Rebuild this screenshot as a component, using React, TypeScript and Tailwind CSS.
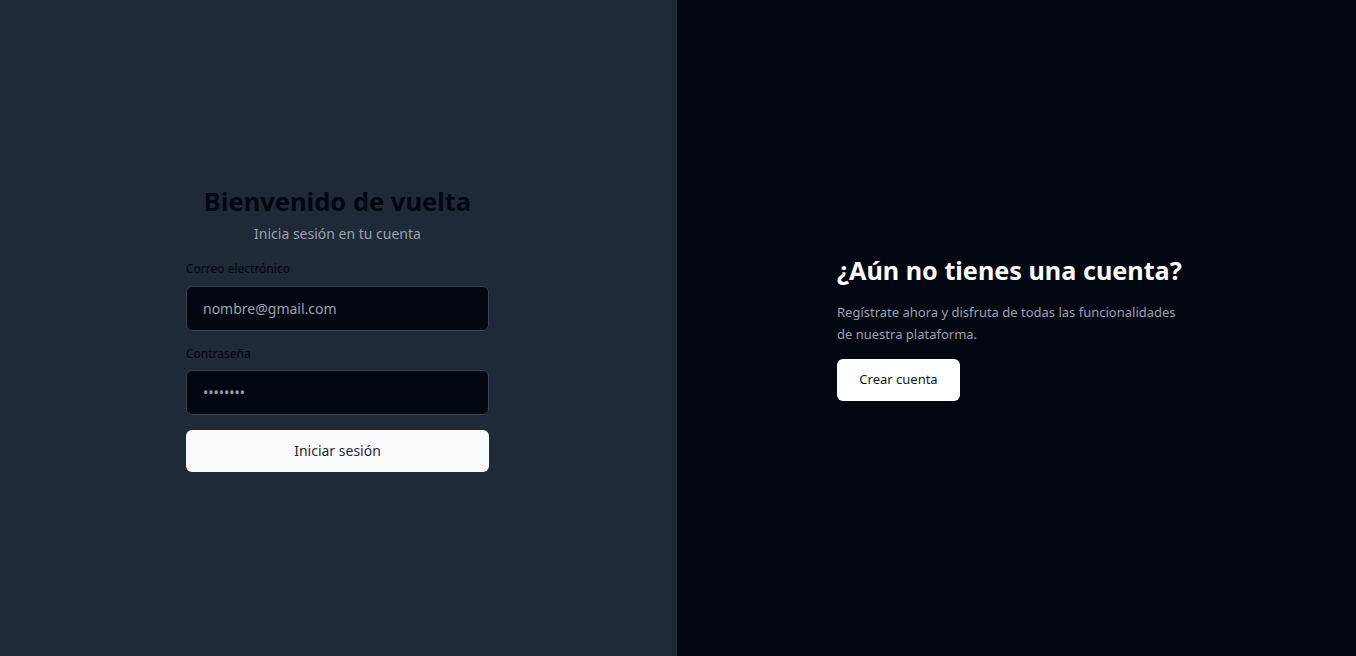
export default function App() {
  return (
    <div
      className="flex h-screen w-full"
      style={{ fontFamily: '"Noto Sans", "Open Sans", sans-serif' }}
    >
      <div className="flex w-[677px] shrink-0 flex-col items-center justify-center bg-[#1f2937] pr-[2px]">
        <div className="flex w-[303px] flex-col">
          <h1 className="text-center text-[25.5px] leading-[32px] font-bold text-[#030712]">
            Bienvenido de vuelta
          </h1>
          <p className="mt-[7px] text-center text-sm text-gray-400">Inicia sesión en tu cuenta</p>
          <label className="mt-[17px] text-xs text-[#030712]">Correo electrónico</label>
          <input
            type="email"
            placeholder="nombre@gmail.com"
            className="mt-[9px] h-[45px] rounded-md border border-gray-700 bg-[#030712] px-4 text-sm text-gray-200 placeholder:text-gray-400 outline-none"
          />
          <label className="mt-[15px] text-xs text-[#030712]">Contraseña</label>
          <input
            type="password"
            defaultValue="password"
            className="mt-[8px] h-[45px] rounded-md border border-gray-700 bg-[#030712] px-4 text-sm text-gray-400 outline-none"
          />
          <button
            type="button"
            className="mt-[15px] h-[42px] rounded-md bg-gray-50 text-sm text-gray-800"
          >
            Iniciar sesión
          </button>
        </div>
      </div>
      <div className="flex flex-1 flex-col justify-center bg-[#030712] pl-[160px]">
        <h2 className="text-[25.2px] leading-[30px] font-bold text-white">¿Aún no tienes una cuenta?</h2>
        <p className="mt-[16px] w-[348px] text-[13px] leading-[22px] text-gray-400">
          Regístrate ahora y disfruta de todas las funcionalidades de nuestra plataforma.
        </p>
        <button
          type="button"
          className="mt-[14px] h-[42px] w-[123px] rounded-md bg-white text-[13px] text-gray-900"
        >
          Crear cuenta
        </button>
      </div>
    </div>
  );
}
